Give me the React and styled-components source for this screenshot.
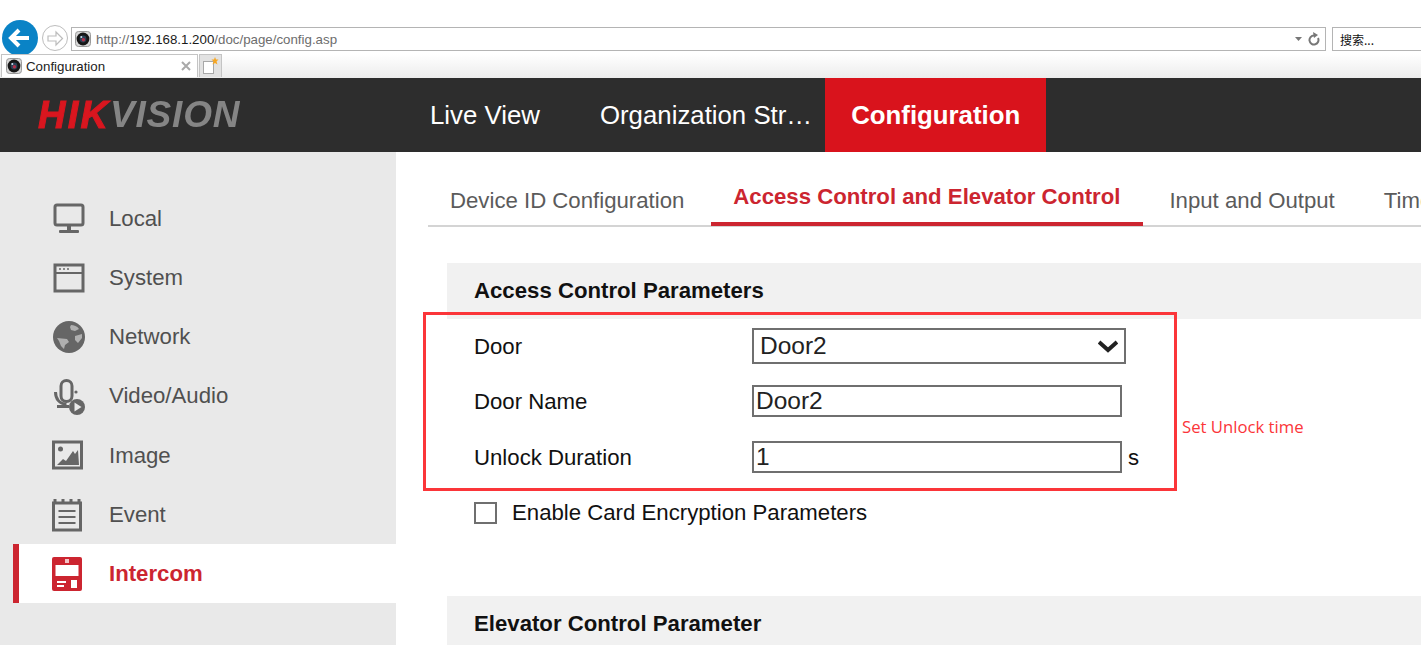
import styled, { createGlobalStyle } from "styled-components";

const GlobalStyle = createGlobalStyle`
  html, body {
    margin: 0;
    padding: 0;
    background: #fff;
    overflow: hidden;
  }
  body {
    font-family: "Liberation Sans", Arial, sans-serif;
  }
`;

const Page = styled.div`
  width: 1421px;
  height: 645px;
  overflow: hidden;
  display: flex;
  flex-direction: column;
`;

/* browser chrome */
const Chrome = styled.div`
  height: 78px;
  flex: none;
  display: flex;
  flex-direction: column;
  padding-top: 20px;
  box-sizing: border-box;
  background: #fff;
`;

const NavRow = styled.div`
  height: 36px;
  display: flex;
  align-items: center;
  padding-left: 2px;
  flex: none;
`;

const BackButton = styled.div`
  width: 36px;
  height: 36px;
  border-radius: 50%;
  background: #0a83c6;
  display: flex;
  align-items: center;
  justify-content: center;
  flex: none;
`;

const ForwardButton = styled.div`
  width: 26px;
  height: 26px;
  box-sizing: border-box;
  border: 1px solid #bdbdbd;
  border-radius: 50%;
  margin-left: 4px;
  display: flex;
  align-items: center;
  justify-content: center;
  flex: none;
`;

const AddressBar = styled.div`
  width: 1255px;
  height: 24px;
  margin: 2px 0 0 3px;
  box-sizing: border-box;
  border: 1px solid #b4b4b4;
  display: flex;
  align-items: center;
  padding: 0 4px 0 3px;
  font-size: 13.3px;
  color: #6d6d6d;
  flex: none;
`;

const Url = styled.span`
  margin-left: 5px;
  flex: 1;
  b {
    font-weight: normal;
    color: #1a1a1a;
  }
`;

const SearchBox = styled.div`
  width: 95px;
  height: 24px;
  margin: 2px 0 0 6px;
  box-sizing: border-box;
  border: 1px solid #b4b4b4;
  display: flex;
  align-items: center;
  padding-left: 7px;
  font-family: "Noto Sans CJK SC", sans-serif;
  font-size: 12px;
  color: #111;
  flex: none;
`;

const TabRow = styled.div`
  flex: 1;
  display: flex;
  align-items: flex-end;
  padding: 0 0 1px 1px;
  background: linear-gradient(#fff, #ececec);
  margin-top: -2px;
`;

const BrowserTab = styled.div`
  width: 197px;
  height: 23px;
  box-sizing: border-box;
  background: #fff;
  border: 1px solid #c4c4c4;
  border-bottom: none;
  display: flex;
  align-items: center;
  padding: 0 6px 0 4px;
  font-size: 13.3px;
  color: #222;
  gap: 4px;
  flex: none;
`;

const TabTitle = styled.span`
  flex: 1;
`;

const NewTab = styled.div`
  width: 23px;
  height: 23px;
  margin-left: 1px;
  box-sizing: border-box;
  background: #e2e2e2;
  border: 1px solid #c4c4c4;
  border-bottom: none;
  display: flex;
  align-items: center;
  justify-content: center;
  flex: none;
`;

/* app header */
const Header = styled.header`
  height: 74px;
  flex: none;
  background: #2d2d2d;
  display: flex;
  align-items: stretch;
`;

const Logo = styled.div`
  width: 400px;
  padding-left: 38px;
  box-sizing: border-box;
  flex: none;
  display: flex;
  align-items: center;
  font-size: 38px;
  font-weight: bold;
  font-style: italic;
  letter-spacing: 2.2px;
  filter: blur(0.5px);
  color: #d9161f;
  -webkit-text-stroke: 1px #d9161f;
  span {
    font-size: 37px;
    letter-spacing: 0.8px;
    color: #858585;
    -webkit-text-stroke: 0;
  }
`;

const HeaderNav = styled.nav`
  display: flex;
  align-items: stretch;
  padding-left: 30px;
  color: #fff;
  font-size: 25.8px;
`;

const HeaderItem = styled.div`
  display: flex;
  align-items: center;
  padding: ${(p) => (p.$active ? "0 26px" : "0")};
  margin-right: ${(p) => p.$gap || 0}px;
  background: ${(p) => (p.$active ? "#d9131c" : "transparent")};
  font-weight: ${(p) => (p.$active ? "bold" : "normal")};
`;

/* page body */
const Body = styled.div`
  flex: 1;
  display: flex;
  min-height: 0;
`;

const Sidebar = styled.aside`
  width: 396px;
  flex: none;
  background: #e9e9e9;
  box-sizing: border-box;
  padding: 37.25px 0 0 13px;
`;

const SideItem = styled.div`
  height: ${(p) => (p.$active ? "59px" : "59.2px")};
  display: flex;
  align-items: center;
  box-sizing: border-box;
  padding-left: ${(p) => (p.$active ? "33px" : "39px")};
  border-left: ${(p) => (p.$active ? "6px solid #cc2530" : "none")};
  background: ${(p) => (p.$active ? "#fff" : "transparent")};
  color: ${(p) => (p.$active ? "#cc2530" : "#505050")};
  font-size: 22.2px;
  font-weight: ${(p) => (p.$active ? "bold" : "normal")};
`;

const SideIcon = styled.svg`
  width: 34px;
  height: 34px;
  margin-right: 23px;
  flex: none;
  overflow: visible;
`;

const Content = styled.main`
  flex: 1;
  min-width: 0;
  position: relative;
  background: #fff;
  padding: 0 0 0 32px;
  overflow: hidden;
`;

const Tabs = styled.div`
  height: 75px;
  box-sizing: border-box;
  border-bottom: 2px solid #d4d4d4;
  display: flex;
  align-items: flex-end;
  font-size: 22.2px;
  white-space: nowrap;
`;

const ContentTab = styled.div`
  height: ${(p) => (p.$active ? "42px" : "37px")};
  box-sizing: border-box;
  padding: ${(p) => p.$pad};
  margin-bottom: ${(p) => (p.$active ? "-1px" : "0")};
  flex: none;
  color: ${(p) => (p.$active ? "#cc2530" : "#5b5b5b")};
  font-weight: ${(p) => (p.$active ? "bold" : "normal")};
  border-bottom: ${(p) => (p.$active ? "4px solid #cc2530" : "none")};
`;

const Section = styled.section`
  margin: ${(p) => p.$top}px 0 0 19px;
`;

const SectionTitle = styled.h3`
  margin: 0;
  height: 56px;
  display: flex;
  align-items: center;
  padding-left: 27px;
  background: #f1f1f1;
  color: #111;
  font-size: 22.2px;
  font-weight: bold;
`;

const Form = styled.div`
  display: flex;
  flex-direction: column;
  padding: 9px 0 0 27px;
`;

const Row = styled.div`
  display: flex;
  align-items: center;
  height: ${(p) => p.$h}px;
  margin-bottom: ${(p) => p.$mb || 0}px;
  font-size: 22.2px;
  color: #111;
`;

const Label = styled.div`
  width: 278px;
  flex: none;
  padding-top: 1px;
`;

const Field = styled.div`
  width: ${(p) => p.$w}px;
  height: 100%;
  box-sizing: border-box;
  border: 2px solid #6f6f6f;
  display: flex;
  align-items: center;
  justify-content: space-between;
  padding: ${(p) => (p.$select ? "0 6px 0 6px" : "0 0 0 2px")};
  font-size: 24.5px;
  color: #222;
  background: #fff;
`;

const Unit = styled.span`
  margin-left: 6px;
  padding-top: 1px;
`;

const CheckRow = styled.div`
  display: flex;
  align-items: center;
  margin: 27px 0 0 27px;
  font-size: 22.2px;
  color: #111;
`;

const Box = styled.div`
  width: 23px;
  height: 22px;
  box-sizing: border-box;
  border: 2px solid #6f6f6f;
  margin-right: 15px;
  flex: none;
`;

/* red annotation added over the screenshot */
const Highlight = styled.div`
  position: absolute;
  left: 27px;
  top: 160px;
  width: 754px;
  height: 179px;
  box-sizing: border-box;
  border: 3px solid #fb3539;
`;

const Note = styled.div`
  position: absolute;
  left: 786px;
  top: 263px;
  color: #fb3539;
  font-family: "Open Sans", sans-serif;
  font-size: 16.7px;
`;

function Favicon({ size = 16 }) {
  return (
    <svg width={size} height={size} viewBox="0 0 16 16">
      <rect x="0.5" y="0.5" width="15" height="15" rx="3" fill="#d8d8d8" stroke="#9a9a9a" />
      <circle cx="8" cy="8" r="6.4" fill="#161616" />
      <circle cx="8" cy="8" r="3.4" fill="#2b4256" />
      <circle cx="8.4" cy="8.8" r="1.7" fill="#b5304a" />
      <circle cx="6.3" cy="6" r="1" fill="#cfe0ee" />
    </svg>
  );
}

const icons = {
  local: (
    <>
      <rect x="3" y="3" width="28" height="20" rx="2" fill="none" stroke="#666" strokeWidth="3" />
      <rect x="15" y="23" width="4" height="5" fill="#666" />
      <rect x="7" y="28" width="20" height="3" rx="1" fill="#666" />
    </>
  ),
  system: (
    <>
      <rect x="3" y="4" width="28" height="26" fill="none" stroke="#666" strokeWidth="3" />
      <rect x="3" y="11" width="28" height="2" fill="#666" />
      <rect x="7" y="7" width="2" height="2" fill="#888" />
      <rect x="11" y="7" width="2" height="2" fill="#888" />
      <rect x="15" y="7" width="2" height="2" fill="#888" />
    </>
  ),
  network: (
    <>
      <circle cx="17" cy="17" r="16" fill="#666" />
      <path d="M19 5c3 0 6 1 8 4l-4 2-4-1-1-3z M23 16l7-2 0 4-4 5-3-3z M5 18l10 1 2 3-4 3-1 4-3-3-2-5z" fill="#b0b0b0" />
    </>
  ),
  video: (
    <>
      <rect x="9" y="1.5" width="11" height="21" rx="5.5" fill="none" stroke="#666" strokeWidth="3" />
      <path d="M3.5 13c0 7 4 12 11 12" fill="none" stroke="#666" strokeWidth="3" />
      <rect x="5" y="26" width="12" height="3" fill="#666" />
      <circle cx="24" cy="13" r="1.6" fill="#666" />
      <circle cx="25" cy="28" r="8" fill="#666" />
      <path d="M22.5 23.5l7 4.5-7 4.5z" fill="#e9e9e9" />
    </>
  ),
  image: (
    <>
      <rect x="1.5" y="3" width="28" height="26" fill="#e9e9e9" stroke="#666" strokeWidth="3" />
      <circle cx="8.5" cy="10" r="2.5" fill="#666" />
      <path d="M5 26l6-6 3 2 7-10 2 3 3-4 1 15z" fill="#666" />
    </>
  ),
  event: (
    <>
      <rect x="1.5" y="5" width="27" height="27" fill="none" stroke="#666" strokeWidth="3" />
      <rect x="1.5" y="1" width="3" height="5" fill="#666" />
      <rect x="9.5" y="1" width="3" height="5" fill="#666" />
      <rect x="17.5" y="1" width="3" height="5" fill="#666" />
      <rect x="25.5" y="1" width="3" height="5" fill="#666" />
      <rect x="6.5" y="12" width="17" height="2" fill="#666" />
      <rect x="6.5" y="18" width="17" height="2" fill="#666" />
      <rect x="6.5" y="24" width="17" height="2" fill="#666" />
    </>
  ),
  intercom: (
    <>
      <rect x="0" y="0" width="30" height="34" rx="2" fill="#cc2530" />
      <rect x="13" y="2" width="4" height="4" fill="#f3c4c7" />
      <rect x="3.5" y="8" width="23" height="11" fill="#fff" />
      <rect x="5" y="24" width="9" height="2" fill="#fff" />
      <rect x="5" y="28" width="7" height="2" fill="#fff" />
      <rect x="19" y="23" width="6" height="8" fill="#fff" />
    </>
  ),
};

const menu = [
  { key: "local", label: "Local" },
  { key: "system", label: "System" },
  { key: "network", label: "Network" },
  { key: "video", label: "Video/Audio" },
  { key: "image", label: "Image" },
  { key: "event", label: "Event" },
  { key: "intercom", label: "Intercom", active: true },
];

export default function App() {
  return (
    <Page>
      <GlobalStyle />
      <Chrome>
        <NavRow>
          <BackButton>
            <svg width="24" height="22" viewBox="0 0 24 22">
              <path d="M11 3L3 11l8 8M3 11h18" fill="none" stroke="#fff" strokeWidth="4" />
            </svg>
          </BackButton>
          <ForwardButton>
            <svg width="19" height="17" viewBox="0 0 19 17">
              <path d="M10 2l6.5 6.5L10 15v-4H2V6h8z" fill="none" stroke="#bdbdbd" strokeWidth="1.2" />
            </svg>
          </ForwardButton>
          <AddressBar>
            <Favicon />
            <Url>
              http://<b>192.168.1.200</b>/doc/page/config.asp
            </Url>
            <svg width="26" height="14" viewBox="0 0 26 14">
              <path d="M0 5h7l-3.5 4z" fill="#777" />
              <path d="M19 3.5a4.5 4.5 0 1 0 4 2.5" fill="none" stroke="#777" strokeWidth="2" />
              <path d="M18 0l5 3-4 3z" fill="#777" />
            </svg>
          </AddressBar>
          <SearchBox>搜索...</SearchBox>
        </NavRow>
        <TabRow>
          <BrowserTab>
            <Favicon />
            <TabTitle>Configuration</TabTitle>
            <svg width="10" height="10" viewBox="0 0 10 10">
              <path d="M1 1l8 8M9 1l-8 8" stroke="#a9a9a9" strokeWidth="2" />
            </svg>
          </BrowserTab>
          <NewTab>
            <svg width="17" height="18" viewBox="0 0 17 18">
              <rect x="1.5" y="4.5" width="10" height="12" fill="#fff" stroke="#a8a8a8" />
              <path d="M13 0l1 2.5 2.5 0-2 2 1 3-2.5-1.5-2.5 1.5 1-3-2-2 2.5 0z" fill="#f5a623" />
            </svg>
          </NewTab>
        </TabRow>
      </Chrome>

      <Header>
        <Logo>
          HIK<span>VISION</span>
        </Logo>
        <HeaderNav>
          <HeaderItem $gap={60}>Live View</HeaderItem>
          <HeaderItem $gap={13}>Organization Str…</HeaderItem>
          <HeaderItem $active>Configuration</HeaderItem>
        </HeaderNav>
      </Header>

      <Body>
        <Sidebar>
          {menu.map((item) => (
            <SideItem key={item.key} $active={item.active}>
              <SideIcon viewBox="0 0 34 34">{icons[item.key]}</SideIcon>
              {item.label}
            </SideItem>
          ))}
        </Sidebar>

        <Content>
          <Tabs>
            <ContentTab $pad="0 27px 0 22px">Device ID Configuration</ContentTab>
            <ContentTab $active $pad="0 23px 0 22px">Access Control and Elevator Control</ContentTab>
            <ContentTab $pad="0 22px 0 26px">Input and Output</ContentTab>
            <ContentTab $pad="0 0 0 27px">Time</ContentTab>
          </Tabs>

          <Section $top={36}>
            <SectionTitle>Access Control Parameters</SectionTitle>
            <Form>
              <Row $h={36} $mb={21}>
                <Label>Door</Label>
                <Field $w={374} $select>
                  Door2
                  <svg width="20" height="15" viewBox="0 0 20 15">
                    <path d="M1 3l9 8 9-8" fill="none" stroke="#222" strokeWidth="4" />
                  </svg>
                </Field>
              </Row>
              <Row $h={32} $mb={24}>
                <Label>Door Name</Label>
                <Field $w={370}>Door2</Field>
              </Row>
              <Row $h={32}>
                <Label>Unlock Duration</Label>
                <Field $w={370}>1</Field>
                <Unit>s</Unit>
              </Row>
            </Form>
            <CheckRow>
              <Box />
              Enable Card Encryption Parameters
            </CheckRow>
          </Section>

          <Section $top={70}>
            <SectionTitle>Elevator Control Parameter</SectionTitle>
          </Section>

          <Highlight />
          <Note>Set Unlock time</Note>
        </Content>
      </Body>
    </Page>
  );
}
